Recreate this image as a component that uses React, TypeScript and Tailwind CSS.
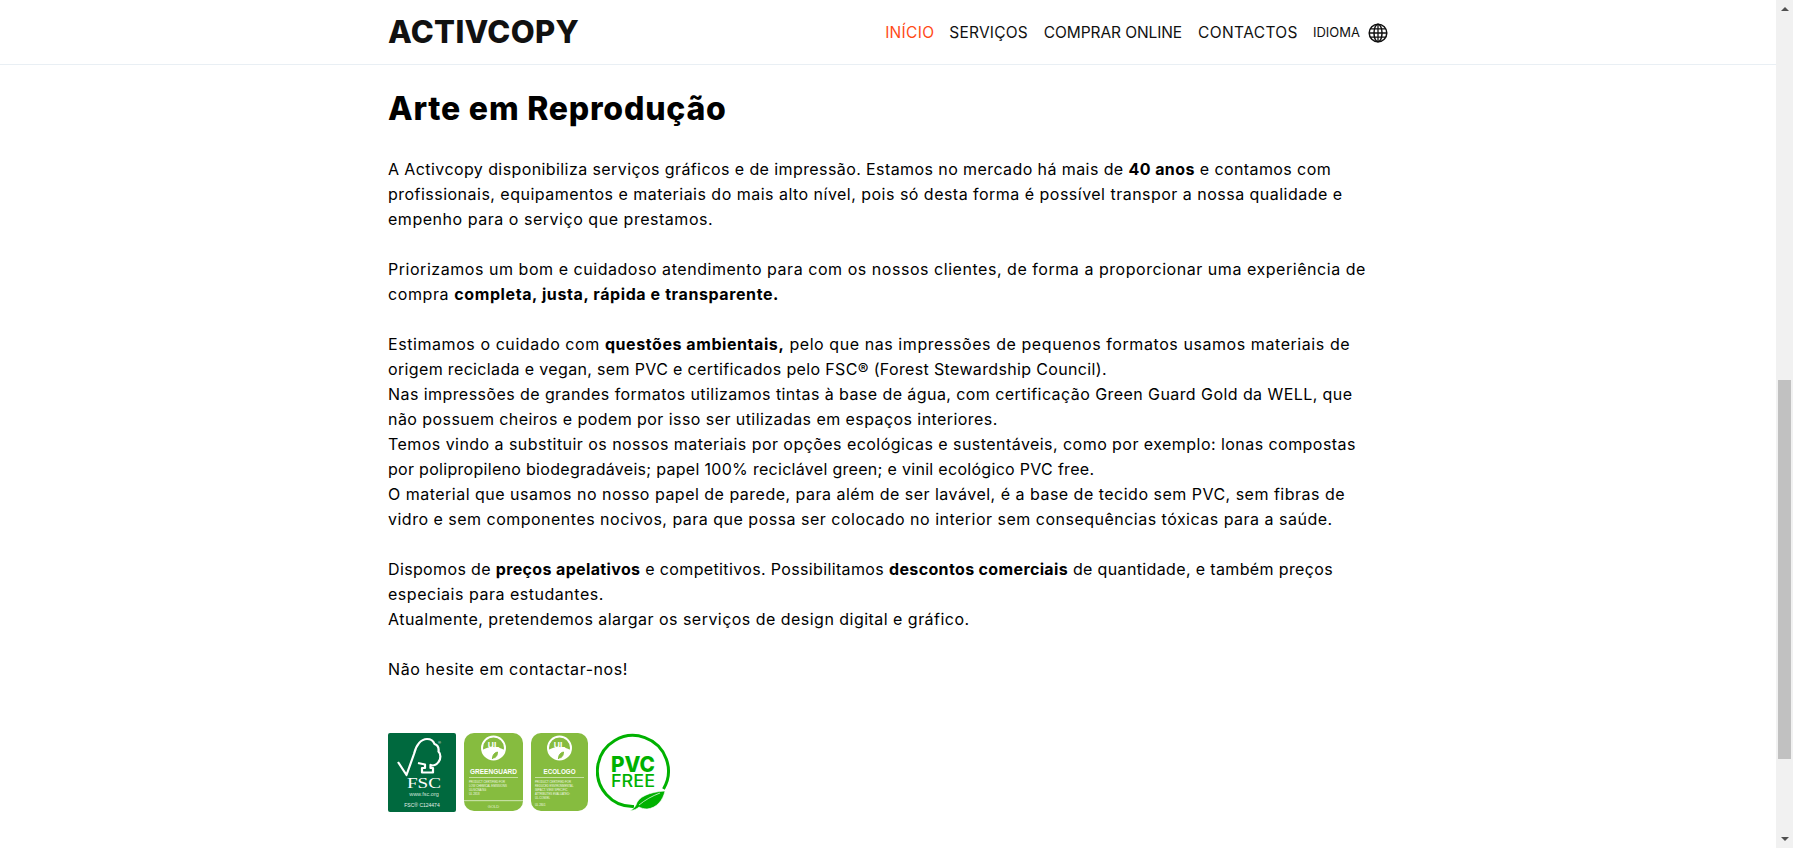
import { ReactNode } from "react";

const font = "font-['Inter','Liberation_Sans',sans-serif]";

function Globe() {
  return (
    <svg width="20" height="20" viewBox="0 0 20 20" fill="none" stroke="#111" strokeWidth="1.5">
      <circle cx="10" cy="10" r="8.8" />
      <ellipse cx="10" cy="10" rx="4" ry="8.8" />
      <path d="M10 1.2v17.6M1.2 10h17.6M2.4 5.8h15.2M2.4 14.2h15.2" strokeWidth="1.3" />
    </svg>
  );
}

function FscLogo() {
  return (
    <svg width="68" height="79" viewBox="0 0 68 79">
      <rect width="68" height="79" rx="2" fill="#00693e" />
      <path
        d="M10 29L18.5 42L26 21C28 12 33 6 39 6C43 6 45.5 8 46.5 11C49.5 12 51 15 50.5 18.5C53 21 53 26 50.5 29C48.5 32 45 33 42.5 32L42.5 35L45 35L45 39.5L34 39.5L34 35L37 35L37 31.5L30 30"
        fill="none"
        stroke="#fff"
        strokeWidth="2.2"
        strokeLinejoin="round"
      />
      <text x="50" y="11" fill="#fff" fontSize="4" fontFamily="Liberation Sans, sans-serif">®</text>
      <text x="36" y="55" textAnchor="middle" fill="#fff" fontSize="15" fontFamily="Liberation Serif, serif" textLength="34" lengthAdjust="spacingAndGlyphs">FSC</text>
      <text x="36" y="63" textAnchor="middle" fill="#cfe3d8" fontSize="5.5" fontFamily="Liberation Sans, sans-serif">www.fsc.org</text>
      <text x="34" y="74" textAnchor="middle" fill="#e6f0ea" fontSize="5" fontFamily="Liberation Sans, sans-serif">FSC® C124474</text>
    </svg>
  );
}

function UlBadge({ cx }: { cx: number }) {
  return (
    <g>
      <circle cx={cx} cy="15" r="11.5" fill="none" stroke="#fff" strokeWidth="2" />
      <path d={`M${cx - 11} 17c6-4 15-4 22 0c-1 6-5 9-11 9s-10-3-11-9z`} fill="#fff" />
      <text x={cx} y="14.5" textAnchor="middle" fill="#fff" fontSize="8.5" fontWeight="700" fontFamily="Liberation Sans, sans-serif">UL</text>
      <path d={`M${cx - 1} 26c0-3 1-6 5-7 0 4-2 6-5 6`} fill="#86bc3f" stroke="#86bc3f" strokeWidth="1" />
    </g>
  );
}

function GreenguardLogo() {
  return (
    <svg width="59" height="78" viewBox="0 0 59 78" fontFamily="Liberation Sans, sans-serif">
      <rect width="59" height="78" rx="10" fill="#86bc3f" />
      <UlBadge cx={29.5} />
      <text x="29.5" y="41" textAnchor="middle" fill="#fff" fontSize="6.6" fontWeight="700" textLength="47" lengthAdjust="spacingAndGlyphs">GREENGUARD</text>
      <rect x="5" y="44" width="49" height="0.8" fill="#d6e9bb" />
      <g fill="#f2f8e8" fontSize="2.8">
        <text x="5" y="50">PRODUCT CERTIFIED FOR</text>
        <text x="5" y="54">LOW CHEMICAL EMISSIONS</text>
        <text x="5" y="58">UL/GCNA/SG</text>
        <text x="5" y="62">UL 2818</text>
      </g>
      <rect y="67" width="59" height="1.2" fill="#c4dfa0" />
      <text x="29.5" y="75" textAnchor="middle" fill="#e4f1d2" fontSize="4">GOLD</text>
    </svg>
  );
}

function EcologoLogo() {
  return (
    <svg width="57" height="78" viewBox="0 0 57 78" fontFamily="Liberation Sans, sans-serif">
      <rect width="57" height="78" rx="10" fill="#86bc3f" />
      <UlBadge cx={28.5} />
      <text x="28.5" y="41" textAnchor="middle" fill="#fff" fontSize="6.6" fontWeight="700" textLength="32" lengthAdjust="spacingAndGlyphs">ECOLOGO</text>
      <rect x="4" y="44" width="49" height="0.8" fill="#d6e9bb" />
      <g fill="#f2f8e8" fontSize="2.8">
        <text x="4" y="50">PRODUCT CERTIFIED FOR</text>
        <text x="4" y="54">REDUCED ENVIRONMENTAL</text>
        <text x="4" y="58">IMPACT. VIEW SPECIFIC</text>
        <text x="4" y="62">ATTRIBUTES EVALUATED:</text>
        <text x="4" y="66">UL.COM/EL</text>
        <text x="4" y="73">UL 2801</text>
      </g>
    </svg>
  );
}

function PvcFreeLogo() {
  return (
    <svg width="76" height="80" viewBox="0 0 76 80" fontFamily="Inter, Liberation Sans, sans-serif">
      <path d="M38 73.5A35.5 35.5 0 1 1 67.5 56" fill="none" stroke="#00b100" strokeWidth="3" />
      <text x="37" y="39" textAnchor="middle" fill="#00b100" fontSize="22" fontWeight="800" textLength="44" lengthAdjust="spacingAndGlyphs">PVC</text>
      <text x="37" y="54" textAnchor="middle" fill="#00b100" fontSize="17" fontWeight="500" textLength="44" lengthAdjust="spacingAndGlyphs">FREE</text>
      <path d="M34 78c3-2 5-4 6-6 2-8 13-13 29-14-2 9-8 17-18 18-3 0-6-1-8-2-2 2-5 3-9 4z" fill="#00b100" stroke="#fff" strokeWidth="0.6" />
      <path d="M43 72c6-5 13-9 21-12" stroke="#fff" strokeWidth="0.7" fill="none" />
    </svg>
  );
}

function Line({ className, children }: { className: string; children: ReactNode }) {
  return <span className={`block whitespace-nowrap ${className}`}>{children}</span>;
}

function Scrollbar() {
  return (
    <aside className="flex h-full w-[17px] shrink-0 flex-col items-center bg-[#f1f1f1]">
      <div className="mt-[7px] h-0 w-0 border-x-[4px] border-b-[4px] border-x-transparent border-b-[#505050]" />
      <div className="mt-[369px] h-[379px] w-[13px] shrink-0 bg-[#c1c1c1]" />
      <div className="mt-[78px] h-0 w-0 border-x-[4px] border-t-[4px] border-x-transparent border-t-[#505050]" />
    </aside>
  );
}

export default function App() {
  return (
    <div className={`flex h-screen overflow-hidden bg-white text-black ${font}`}>
      <div className="min-w-0 flex-1">
        <header className="h-[65px] border-b border-[#e9eff4]">
          <div className="mx-auto flex h-full w-[1000px] items-center justify-between">
            <a className="text-[31px] font-extrabold tracking-[0.3px] text-[#111]">ACTIVCOPY</a>
            <nav className="mt-[2px] flex items-center text-[15.5px] text-[#111]">
              <a className="mr-[15px] tracking-[0.3px] text-[#ff4a17]">INÍCIO</a>
              <a className="mr-[16px] tracking-[0.2px]">SERVIÇOS</a>
              <a className="mr-[16px] tracking-[-0.1px]">COMPRAR ONLINE</a>
              <a className="mr-[15px] tracking-[0.4px]">CONTACTOS</a>
              <span className="mr-[8px] text-[13px]">IDIOMA</span>
              <Globe />
            </nav>
          </div>
        </header>
        <main className="mx-auto w-[1000px]">
          <h1 className="mt-[20px] mb-[24px] text-[32px] leading-[48px] font-extrabold tracking-[0.8px]">Arte em Reprodução</h1>
          <div className="text-[16px] leading-[25px]">
            <p className="mb-[25px]">
              <Line className="tracking-[0.41px]">A Activcopy disponibiliza serviços gráficos e de impressão. Estamos no mercado há mais de <b>40 anos</b> e contamos com</Line>
              <Line className="tracking-[0.48px]">profissionais, equipamentos e materiais do mais alto nível, pois só desta forma é possível transpor a nossa qualidade e</Line>
              <Line className="tracking-[0.53px]">empenho para o serviço que prestamos.</Line>
            </p>
            <p className="mb-[25px]">
              <Line className="tracking-[0.54px]">Priorizamos um bom e cuidadoso atendimento para com os nossos clientes, de forma a proporcionar uma experiência de</Line>
              <Line className="tracking-[0.6px]">compra <b>completa, justa, rápida e transparente.</b></Line>
            </p>
            <p className="mb-[25px]">
              <Line className="tracking-[0.57px]">Estimamos o cuidado com <b>questões ambientais,</b> pelo que nas impressões de pequenos formatos usamos materiais de</Line>
              <Line className="tracking-[0.35px]">origem reciclada e vegan, sem PVC e certificados pelo FSC® (Forest Stewardship Council).</Line>
              <Line className="tracking-[0.43px]">Nas impressões de grandes formatos utilizamos tintas à base de água, com certificação Green Guard Gold da WELL, que</Line>
              <Line className="tracking-[0.43px]">não possuem cheiros e podem por isso ser utilizadas em espaços interiores.</Line>
              <Line className="tracking-[0.45px]">Temos vindo a substituir os nossos materiais por opções ecológicas e sustentáveis, como por exemplo: lonas compostas</Line>
              <Line className="tracking-[0.3px]">por polipropileno biodegradáveis; papel 100% reciclável green; e vinil ecológico PVC free.</Line>
              <Line className="tracking-[0.49px]">O material que usamos no nosso papel de parede, para além de ser lavável, é a base de tecido sem PVC, sem fibras de</Line>
              <Line className="tracking-[0.49px]">vidro e sem componentes nocivos, para que possa ser colocado no interior sem consequências tóxicas para a saúde.</Line>
            </p>
            <p className="mb-[25px]">
              <Line className="tracking-[0.36px]">Dispomos de <b>preços apelativos</b> e competitivos. Possibilitamos <b>descontos comerciais</b> de quantidade, e também preços</Line>
              <Line className="tracking-[0.52px]">especiais para estudantes.</Line>
              <Line className="tracking-[0.47px]">Atualmente, pretendemos alargar os serviços de design digital e gráfico.</Line>
            </p>
            <p className="tracking-[0.58px]">Não hesite em contactar-nos!</p>
          </div>
          <div className="mt-[51px] flex items-start gap-[8px]">
            <FscLogo />
            <GreenguardLogo />
            <EcologoLogo />
            <PvcFreeLogo />
          </div>
        </main>
      </div>
      <Scrollbar />
    </div>
  );
}
